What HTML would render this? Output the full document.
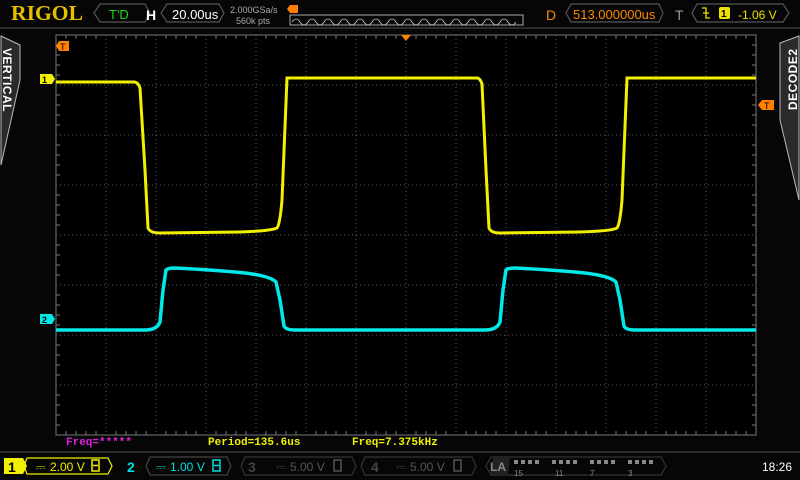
<!DOCTYPE html>
<html><head><meta charset="utf-8"><style>
body{margin:0;width:800px;height:480px;background:#050505;overflow:hidden;font-family:"Liberation Sans",sans-serif;position:relative}
.a{position:absolute;white-space:nowrap}
.m{font-family:"Liberation Mono",monospace;font-weight:bold;font-size:11px}
</style></head><body>
<svg class="a" style="left:0;top:0" width="800" height="480" xmlns="http://www.w3.org/2000/svg">
<rect width="800" height="480" fill="#060606"/>
<line x1="0" y1="28" x2="800" y2="28" stroke="#2a2a2a" stroke-width="2"/>
<line x1="0" y1="452" x2="800" y2="452" stroke="#2a2a2a" stroke-width="2"/>
<text x="11" y="20" font-family="Liberation Serif" font-weight="bold" font-size="21" fill="#e8c000" textLength="72" lengthAdjust="spacingAndGlyphs">RIGOL</text>
<path d="M100 4H145L150 13L145 22H100L94 13Z" fill="none" stroke="#555" stroke-width="1.2"/>
<text x="109" y="19" font-size="13" fill="#1ed81e">T'D</text>
<text x="146" y="20" font-size="14" font-weight="bold" fill="#fff">H</text>
<path d="M167 4H219L224 13L219 22H167L161 13Z" fill="none" stroke="#555" stroke-width="1.2"/>
<text x="172" y="19" font-size="13" fill="#fff">20.00us</text>
<text x="230" y="13" font-size="9" fill="#aaa">2.000GSa/s</text>
<text x="236" y="24" font-size="9" fill="#aaa">560k pts</text>
<path d="M290 5h8v8h-8l-3-4z" fill="#ff7f00"/>
<rect x="290" y="15" width="233" height="10" fill="none" stroke="#aaa" stroke-width="1"/>
<path d="M292 22 q4 -6 8 0 t8 0 t8 0 t8 0 t8 0 t8 0 t8 0 t8 0 t8 0 t8 0 t8 0 t8 0 t8 0 t8 0 t8 0 t8 0 t8 0 t8 0 t8 0 t8 0 t8 0 t8 0 t8 0 t8 0 t8 0 t8 0 t8 0 t8 0" fill="none" stroke="#ccc" stroke-width="0.8"/>
<text x="546" y="20" font-size="14" fill="#ff8a00">D</text>
<path d="M571 4H659L663 13L659 22H571L566 13Z" fill="none" stroke="#555" stroke-width="1.2"/>
<text x="573" y="19" font-size="13" fill="#ff8a00">513.000000us</text>
<text x="675" y="20" font-size="14" fill="#999">T</text>
<path d="M697 4H783L789 13L783 22H697L692 13Z" fill="none" stroke="#555" stroke-width="1.2"/>
<path d="M702 8h4v10h4M703 13h6" fill="none" stroke="#f0e000" stroke-width="1.3"/>
<rect x="719" y="7" width="11" height="12" rx="2" fill="#f0e000"/>
<text x="721" y="17" font-size="10" font-weight="bold" fill="#000">1</text>
<text x="738" y="19" font-size="12" fill="#f0e000">-1.06 V</text>
<path d="M1 36L20 45V80L1 165Z" fill="#2a2a2a" stroke="#bbb" stroke-width="1"/>
<text transform="translate(3,48) rotate(90)" font-size="12" font-weight="bold" fill="#fff" letter-spacing="0.5">VERTICAL</text>
<path d="M799 36L780 43V120L799 200Z" fill="#2a2a2a" stroke="#bbb" stroke-width="1"/>
<text transform="translate(797,110) rotate(-90)" font-size="12" font-weight="bold" fill="#fff" letter-spacing="0.5">DECODE2</text>
<rect x="56" y="35" width="700" height="400" fill="#000" stroke="#777" stroke-width="1"/>
<g stroke="#606060" stroke-width="1" stroke-dasharray="1 3">
<path d="M106 35V435M156 35V435M206 35V435M256 35V435M306 35V435M356 35V435M406 35V435M456 35V435M506 35V435M556 35V435M606 35V435M656 35V435M706 35V435"/>
<path d="M56 85H756M56 135H756M56 185H756M56 235H756M56 285H756M56 335H756M56 385H756"/>
</g>
<g stroke="#777" stroke-width="1">
<path d="M66 35v4M76 35v4M86 35v4M96 35v4M116 35v4M126 35v4M136 35v4M146 35v4M166 35v4M176 35v4M186 35v4M196 35v4M216 35v4M226 35v4M236 35v4M246 35v4M266 35v4M276 35v4M286 35v4M296 35v4M316 35v4M326 35v4M336 35v4M346 35v4M366 35v4M376 35v4M386 35v4M396 35v4M416 35v4M426 35v4M436 35v4M446 35v4M466 35v4M476 35v4M486 35v4M496 35v4M516 35v4M526 35v4M536 35v4M546 35v4M566 35v4M576 35v4M586 35v4M596 35v4M616 35v4M626 35v4M636 35v4M646 35v4M666 35v4M676 35v4M686 35v4M696 35v4M716 35v4M726 35v4M736 35v4M746 35v4"/>
<path d="M66 435v-4M76 435v-4M86 435v-4M96 435v-4M116 435v-4M126 435v-4M136 435v-4M146 435v-4M166 435v-4M176 435v-4M186 435v-4M196 435v-4M216 435v-4M226 435v-4M236 435v-4M246 435v-4M266 435v-4M276 435v-4M286 435v-4M296 435v-4M316 435v-4M326 435v-4M336 435v-4M346 435v-4M366 435v-4M376 435v-4M386 435v-4M396 435v-4M416 435v-4M426 435v-4M436 435v-4M446 435v-4M466 435v-4M476 435v-4M486 435v-4M496 435v-4M516 435v-4M526 435v-4M536 435v-4M546 435v-4M566 435v-4M576 435v-4M586 435v-4M596 435v-4M616 435v-4M626 435v-4M636 435v-4M646 435v-4M666 435v-4M676 435v-4M686 435v-4M696 435v-4M716 435v-4M726 435v-4M736 435v-4M746 435v-4"/>
<path d="M56 45h4M56 55h4M56 65h4M56 75h4M56 95h4M56 105h4M56 115h4M56 125h4M56 145h4M56 155h4M56 165h4M56 175h4M56 195h4M56 205h4M56 215h4M56 225h4M56 245h4M56 255h4M56 265h4M56 275h4M56 295h4M56 305h4M56 315h4M56 325h4M56 345h4M56 355h4M56 365h4M56 375h4M56 395h4M56 405h4M56 415h4M56 425h4"/>
<path d="M756 45h-4M756 55h-4M756 65h-4M756 75h-4M756 95h-4M756 105h-4M756 115h-4M756 125h-4M756 145h-4M756 155h-4M756 165h-4M756 175h-4M756 195h-4M756 205h-4M756 215h-4M756 225h-4M756 245h-4M756 255h-4M756 265h-4M756 275h-4M756 295h-4M756 305h-4M756 315h-4M756 325h-4M756 345h-4M756 355h-4M756 365h-4M756 375h-4M756 395h-4M756 405h-4M756 415h-4M756 425h-4"/>
</g>
<path d="M401 35h10l-5 6z" fill="#ff7f00"/>
<path d="M59 41h10v10h-10l-3-5z" fill="#ff7f00"/><text x="60" y="50" font-size="9" fill="#000">T</text>
<path d="M762 100h12v10h-12l-4-5z" fill="#ff7f00"/><text x="764" y="109" font-size="9" fill="#000">T</text>
<path d="M40 74h12l3 5-3 5h-12z" fill="#f0f000"/><text x="42" y="83" font-size="9" font-weight="bold" fill="#000">1</text>
<path d="M40 314h12l3 5-3 5h-12z" fill="#00e8e8"/><text x="42" y="323" font-size="9" font-weight="bold" fill="#000">2</text>
<path d="M56 82H134Q138 82 140 88L145 170L148 228Q150 233 160 233L240 232Q270 231 277 228Q280 224 282 200L287 78H477Q480 78 482 84L486 170L489 228Q491 233 500 233L580 232Q612 231 617 228Q620 224 622 200L627 78H756" fill="none" stroke="#f0f000" stroke-width="3"/>
<path d="M56 330H145Q157 330 160 322L163 290L166 270Q168 268 175 268Q215 270 245 273Q270 276 276 282L280 300L284 326Q286 330 295 330H485Q497 330 500 322L503 290L506 270Q508 268 515 268Q555 270 585 273Q610 276 616 282L620 300L624 326Q626 330 635 330H756" fill="none" stroke="#00e8e8" stroke-width="3.5"/>
<path d="M4 458H23L27 466L23 474H4Z" fill="#f0f000"/>
<path d="M27 458H108L112 466L108 474H27L24 466Z" fill="none" stroke="#f0f000" stroke-width="1.2"/>
<text x="8" y="472" font-size="14" font-weight="bold" fill="#000">1</text>
<text x="36" y="471" font-size="12" fill="#f0f000">⎓</text>
<text x="50" y="471" font-size="12" fill="#f0f000">2.00 V</text>
<rect x="92" y="460" width="7" height="11" fill="none" stroke="#f0f000" stroke-width="1.5"/><line x1="93" y1="465.5" x2="98" y2="465.5" stroke="#f0f000" stroke-width="1.5"/>
<text x="127" y="472" font-size="14" font-weight="bold" fill="#00e0e0">2</text>
<path d="M150 457H227L231 466L227 475H150L146 466Z" fill="none" stroke="#444" stroke-width="1.2"/>
<text x="156" y="471" font-size="12" fill="#00e0e0">⎓</text>
<text x="170" y="471" font-size="12" fill="#00e0e0">1.00 V</text>
<rect x="213" y="460" width="7" height="11" fill="none" stroke="#00e0e0" stroke-width="1.5"/><line x1="214" y1="465.5" x2="219" y2="465.5" stroke="#00e0e0" stroke-width="1.5"/>
<path d="M245 457H352L356 466L352 475H245L241 466Z" fill="none" stroke="#333" stroke-width="1.2"/>
<text x="248" y="472" font-size="14" font-weight="bold" fill="#444">3</text>
<text x="276" y="471" font-size="12" fill="#555">⎓</text>
<text x="290" y="471" font-size="12" fill="#555">5.00 V</text>
<rect x="334" y="460" width="7" height="11" fill="none" stroke="#555" stroke-width="1.5"/>
<path d="M365 457H472L476 466L472 475H365L361 466Z" fill="none" stroke="#333" stroke-width="1.2"/>
<text x="371" y="472" font-size="14" font-weight="bold" fill="#444">4</text>
<text x="396" y="471" font-size="12" fill="#555">⎓</text>
<text x="410" y="471" font-size="12" fill="#555">5.00 V</text>
<rect x="454" y="460" width="7" height="11" fill="none" stroke="#555" stroke-width="1.5"/>
<path d="M491 457H661L666 466L661 475H491L486 466Z" fill="none" stroke="#333" stroke-width="1.2"/>
<path d="M493 458H510L508 474H491Z" fill="#222"/>
<text x="490" y="471" font-size="12" font-weight="bold" fill="#888">LA</text>
<g fill="#888">
<rect x="514" y="460" width="4" height="4"/><rect x="521" y="460" width="4" height="4"/><rect x="528" y="460" width="4" height="4"/><rect x="535" y="460" width="4" height="4"/>
<rect x="552" y="460" width="4" height="4"/><rect x="559" y="460" width="4" height="4"/><rect x="566" y="460" width="4" height="4"/><rect x="573" y="460" width="4" height="4"/>
<rect x="590" y="460" width="4" height="4"/><rect x="597" y="460" width="4" height="4"/><rect x="604" y="460" width="4" height="4"/><rect x="611" y="460" width="4" height="4"/>
<rect x="628" y="460" width="4" height="4"/><rect x="635" y="460" width="4" height="4"/><rect x="642" y="460" width="4" height="4"/><rect x="649" y="460" width="4" height="4"/>
</g>
<text x="514" y="476" font-size="8" fill="#888">15</text><text x="555" y="476" font-size="8" fill="#888">11</text><text x="590" y="476" font-size="8" fill="#888">7</text><text x="628" y="476" font-size="8" fill="#888">3</text>
<text x="762" y="471" font-size="12" fill="#fff">18:26</text>
</svg>
<div class="a m" style="left:66px;top:437px;color:#e020e0">Freq=*****</div>
<div class="a m" style="left:208px;top:437px;color:#f0f000">Period=135.6us</div>
<div class="a m" style="left:352px;top:437px;color:#f0f000">Freq=7.375kHz</div>
</body></html>
